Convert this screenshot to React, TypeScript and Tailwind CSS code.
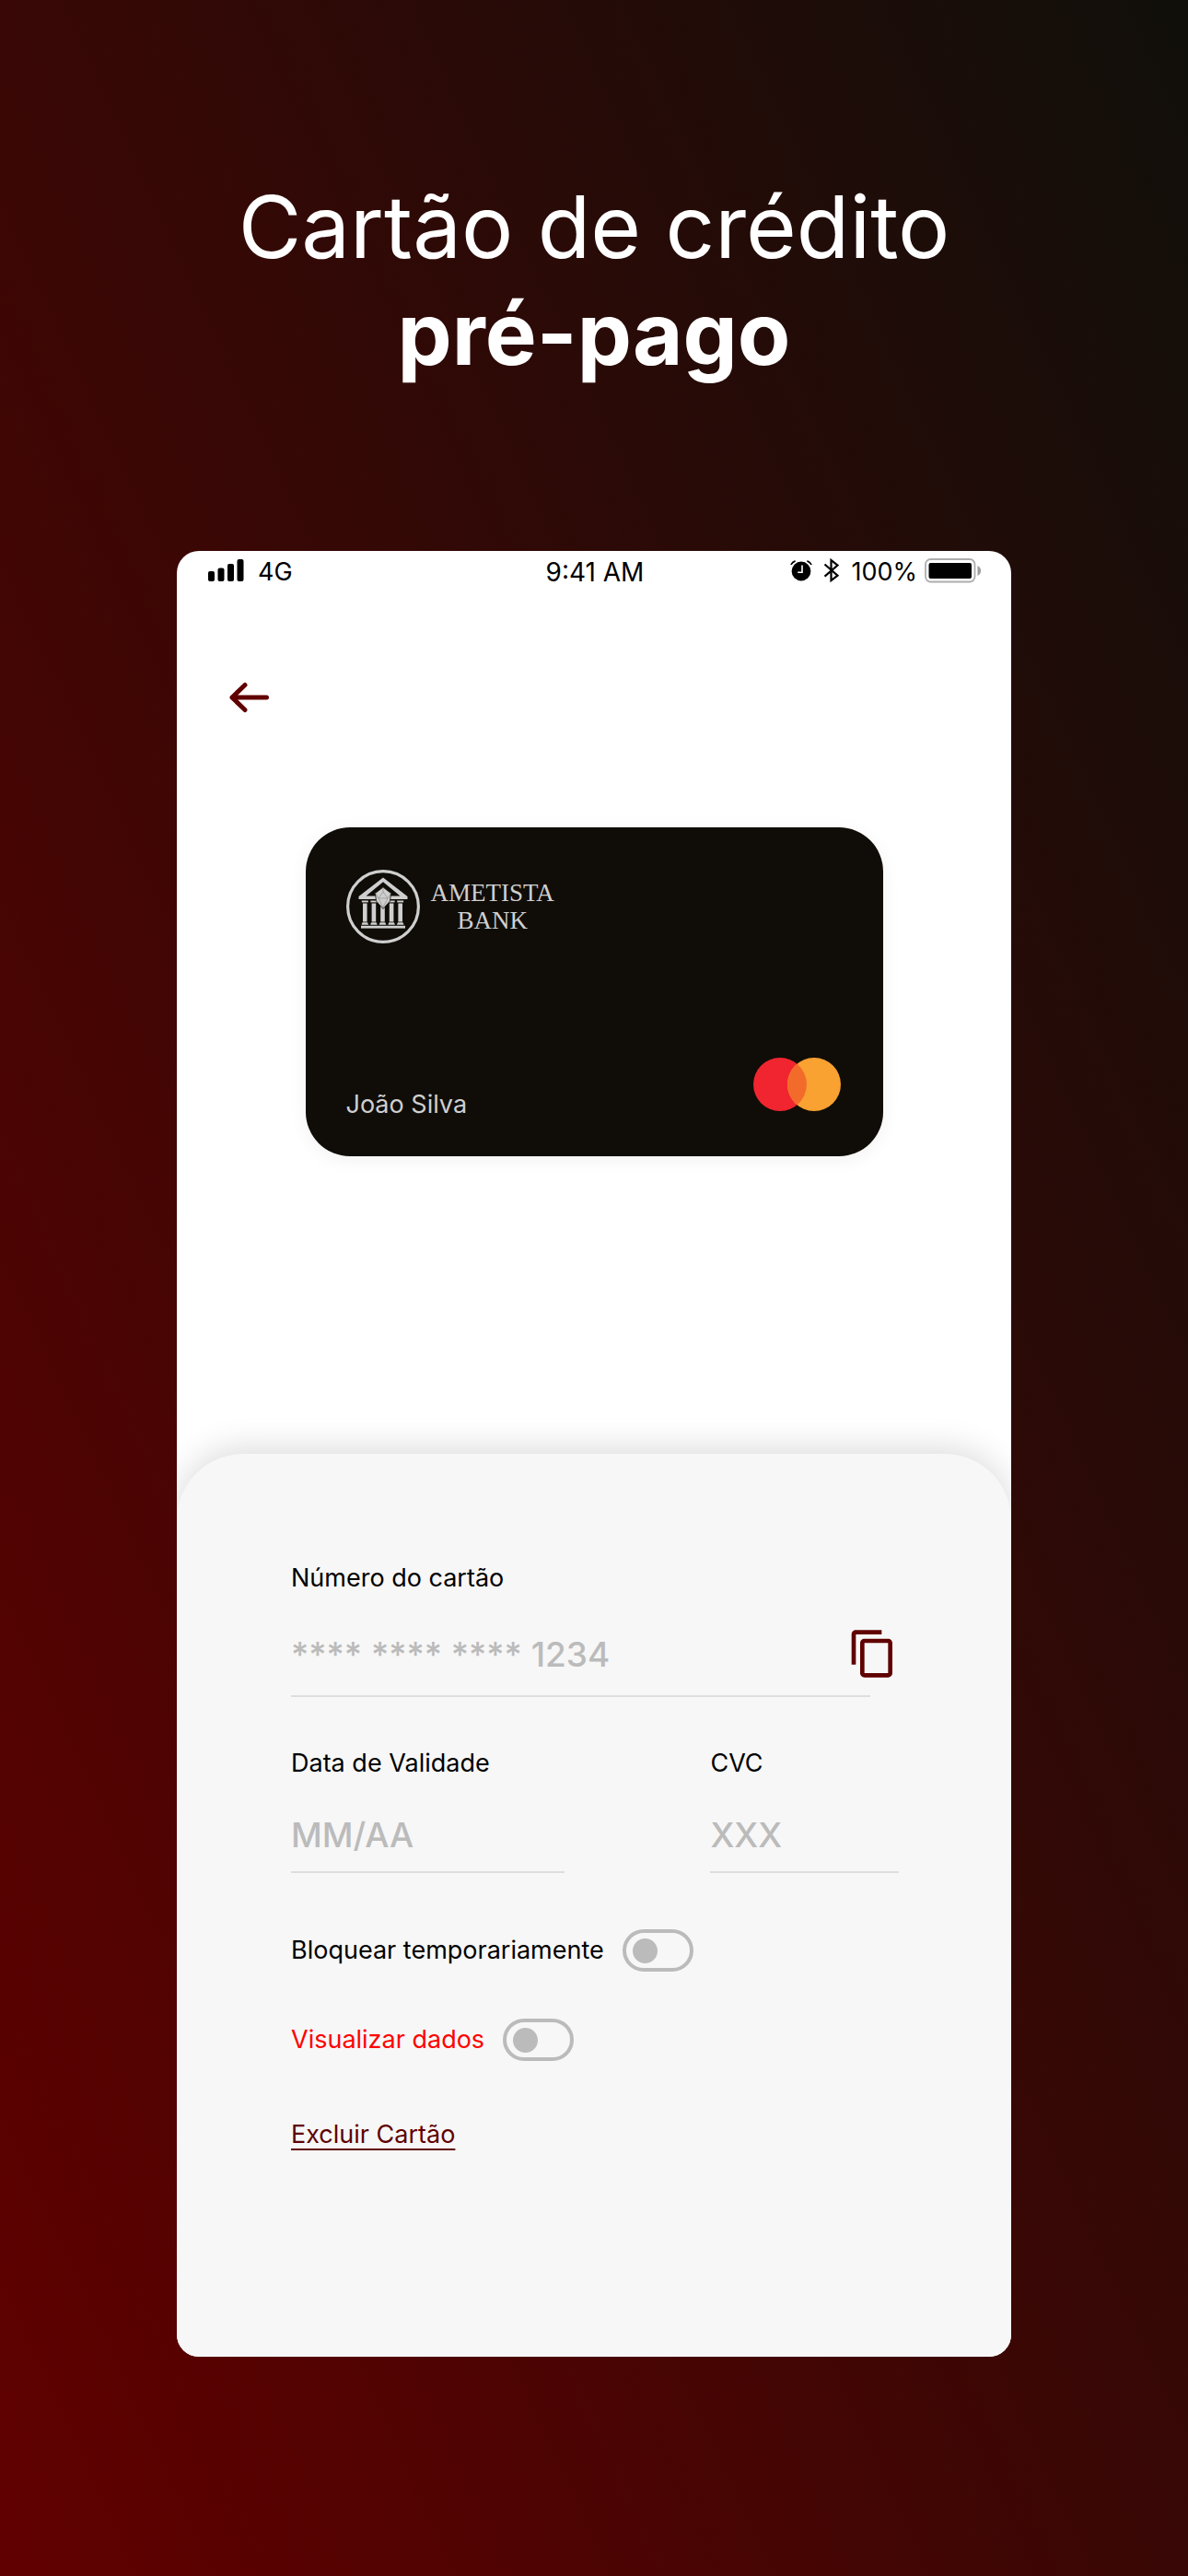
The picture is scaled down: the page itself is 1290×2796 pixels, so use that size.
import { useState } from "react";
import type { ReactNode } from "react";
import { MdContentCopy } from "react-icons/md";

function SignalIcon() {
  return (
    <svg width="40" height="34" viewBox="0 0 40 34" aria-hidden="true">
      <rect x="0" y="16" width="7" height="11" rx="2" />
      <rect x="10.5" y="12.5" width="7" height="14.5" rx="2" />
      <rect x="21" y="8" width="7" height="19" rx="2" />
      <rect x="31.5" y="3" width="7" height="24" rx="2" />
    </svg>
  );
}

function AlarmIcon() {
  return (
    <svg width="24" height="34" viewBox="0 0 24 34" aria-hidden="true">
      <circle cx="12" cy="16" r="10.4" />
      <path d="M13 9.5V17.2H8.2" fill="none" stroke="#fff" strokeWidth="1.6" />
      <path d="M.9 9A8 8 0 0 1 5.6 4.9M18.4 4.9A8 8 0 0 1 23.1 9" fill="none" stroke="#000" strokeWidth="1.7" />
    </svg>
  );
}

function BluetoothIcon() {
  return (
    <svg width="18" height="34" viewBox="0 0 18 34" aria-hidden="true">
      <path d="M1.5 8.5L15.5 20.6L8.5 26V4L15.5 9.6L1.5 21.6" fill="none" stroke="#000" strokeWidth="2.2" />
    </svg>
  );
}

function BatteryIcon() {
  return (
    <svg width="62" height="34" viewBox="0 0 62 34" aria-hidden="true">
      <rect x="1" y="3" width="53.5" height="24.5" rx="5.5" fill="none" stroke="#adadad" strokeWidth="1.8" />
      <rect x="4.5" y="7" width="46.5" height="17" rx="2" />
      <path d="M57.5 10c2.300 1 3.600 3 3.600 5.500s-1.300 4.500-3.600 5.500z" fill="#9d9d9d" />
    </svg>
  );
}

function BankLogo() {
  const columns = [18, 27.6, 37.2, 46.8, 56.4];
  return (
    <svg width="80" height="80" viewBox="0 0 80 80" fill="#cfcfcf" aria-hidden="true">
      <circle cx="40" cy="40" r="38.4" fill="none" stroke="#cfcfcf" strokeWidth="3.2" />
      <path d="M40 8.500L66.500 29V32H13.500V29ZM40 13.200L21.500 28.500H58.500Z" fillRule="evenodd" />
      {columns.map((x) => (
        <g key={x}>
          <rect x={x - 1.2} y="33.5" width="7" height="1.9" />
          <rect x={x} y="36.5" width="4.6" height="20" />
          <path d={`M${x - 0.5} 57.200h5.600l1 2.500h-7.600z`} />
        </g>
      ))}
      <rect x="16" y="60.8" width="48" height="2.8" />
      <path d="M40 19L48.500 25.500L47.500 34L40 42.500L32.500 34L31.500 25.500Z" stroke="#100d08" strokeWidth=".8" />
      <path d="M40 19V24L35 31L40 41L45 31L40 24M35 31L31.500 25.500M45 31L48.500 25.500M35 31H45" fill="none" stroke="#8c8c8a" strokeWidth=".7" />
    </svg>
  );
}

function CardNetworkLogo() {
  return (
    <svg width="95" height="58" viewBox="0 0 95 58" aria-hidden="true">
      <circle cx="29" cy="29" r="29" fill="#f0252f" />
      <circle cx="66" cy="29" r="29" fill="#f9a131" />
      <path d="M47.500 6.700A29 29 0 0 1 47.500 51.300A29 29 0 0 1 47.500 6.700Z" fill="#f26b2b" />
    </svg>
  );
}

function BackIcon() {
  return (
    <svg width="44" height="34" viewBox="0 0 44 34" fill="none" stroke="#600000" strokeWidth="5" strokeLinecap="round" strokeLinejoin="round" aria-hidden="true">
      <path d="M40.500 17H3M17 3.500L3 17L17 30.500" />
    </svg>
  );
}

function Field({ id, label, value, placeholder, className, inputHeight, children }: {
  id: string;
  label: string;
  value?: string;
  placeholder?: string;
  className: string;
  inputHeight: string;
  children?: ReactNode;
}) {
  return (
    <div className={className}>
      <label htmlFor={id} className="block">{label}</label>
      <input
        id={id}
        type="text"
        defaultValue={value}
        placeholder={placeholder}
        className={`mt-9 block w-full border-b-2 border-[#dedede] bg-transparent pb-4 text-[37px] font-medium text-[#bbbbbb] outline-none placeholder:text-[#bbbbbb] ${inputHeight}`}
      />
      {children}
    </div>
  );
}

function Toggle({ label, className }: { label: string; className: string }) {
  const [on, setOn] = useState(false);
  return (
    <label className={className}>
      {label}
      <input
        type="checkbox"
        role="switch"
        checked={on}
        onChange={(e) => setOn(e.target.checked)}
        className="flex h-[46px] w-[77px] cursor-pointer appearance-none items-center rounded-full border-4 border-[#bbbbbb] px-[7px] before:size-[27px] before:rounded-full before:bg-[#bbbbbb] checked:justify-end"
      />
    </label>
  );
}

export default function App() {
  return (
    <main className="min-h-screen bg-linear-to-tr/srgb from-[#610000] to-[#100f0a] px-48 pt-[188px] pb-[238px] font-['Inter',sans-serif] text-[27px] leading-[34px] text-black">
      <h1 className="text-center text-[94px] leading-[116px] font-normal text-white">
        Cartão de crédito
        <strong className="block font-bold">pré-pago</strong>
      </h1>

      <section className="mt-[178px] overflow-hidden rounded-3xl bg-white">
        <header className="grid grid-cols-[1fr_auto_1fr] pt-1.5 pr-8 pl-[34px]">
          <div className="flex gap-3.5">
            <SignalIcon />
            4G
          </div>
          <time className="text-[28px] leading-[34px]">9:41 AM</time>
          <div className="flex justify-end">
            <AlarmIcon />
            <span className="ml-3"><BluetoothIcon /></span>
            <span className="mr-2 ml-3">100%</span>
            <BatteryIcon />
          </div>
        </header>

        <button type="button" aria-label="Voltar" className="mt-[102px] ml-[57px] block cursor-pointer">
          <BackIcon />
        </button>

        <div className="mx-auto mt-[124px] flex h-[357px] w-[627px] max-w-full flex-col justify-between rounded-[48px] bg-[#100d08] pt-[46px] pr-[46px] pb-[39px] pl-11 text-[#cfcfcf] shadow-[0_4px_20px_rgba(0,0,0,0.06)]">
          <div className="flex items-center gap-3">
            <BankLogo />
            <p className="text-center font-['Liberation_Serif',serif] text-[27px] leading-[30px]">
              AMETISTA
              <br />
              BANK
            </p>
          </div>
          <div className="flex items-end justify-between">
            <p>João Silva</p>
            <div className="mb-2.5"><CardNetworkLogo /></div>
          </div>
        </div>

        <form className="mt-[323px] rounded-t-[72px] bg-[#f7f7f7] pt-[118px] pr-[122px] pb-56 pl-31 shadow-[0_-6px_36px_rgba(0,0,0,0.14)]">
          <Field id="numero" label="Número do cartão" value="**** **** **** 1234" className="relative mr-[31px]" inputHeight="h-[76px]">
            <button type="button" aria-label="Copiar número do cartão" className="absolute -right-[31px] bottom-[19px] cursor-pointer text-[#600000]">
              <MdContentCopy size={56} />
            </button>
          </Field>
          <div className="mt-[55px] flex justify-between">
            <Field id="validade" label="Data de Validade" placeholder="MM/AA" className="w-[45%]" inputHeight="h-[66px]" />
            <Field id="cvc" label="CVC" placeholder="XXX" className="w-[31%]" inputHeight="h-[66px]" />
          </div>
          <Toggle label="Bloquear temporariamente" className="mt-[61px] flex items-center gap-5" />
          <Toggle label="Visualizar dados" className="mt-[51px] flex items-center gap-5 text-[#ff0000]" />
          <a href="#excluir" className="mt-[63px] block w-fit text-[#600000] underline decoration-2 underline-offset-[6px]">
            Excluir Cartão
          </a>
        </form>
      </section>
    </main>
  );
}
